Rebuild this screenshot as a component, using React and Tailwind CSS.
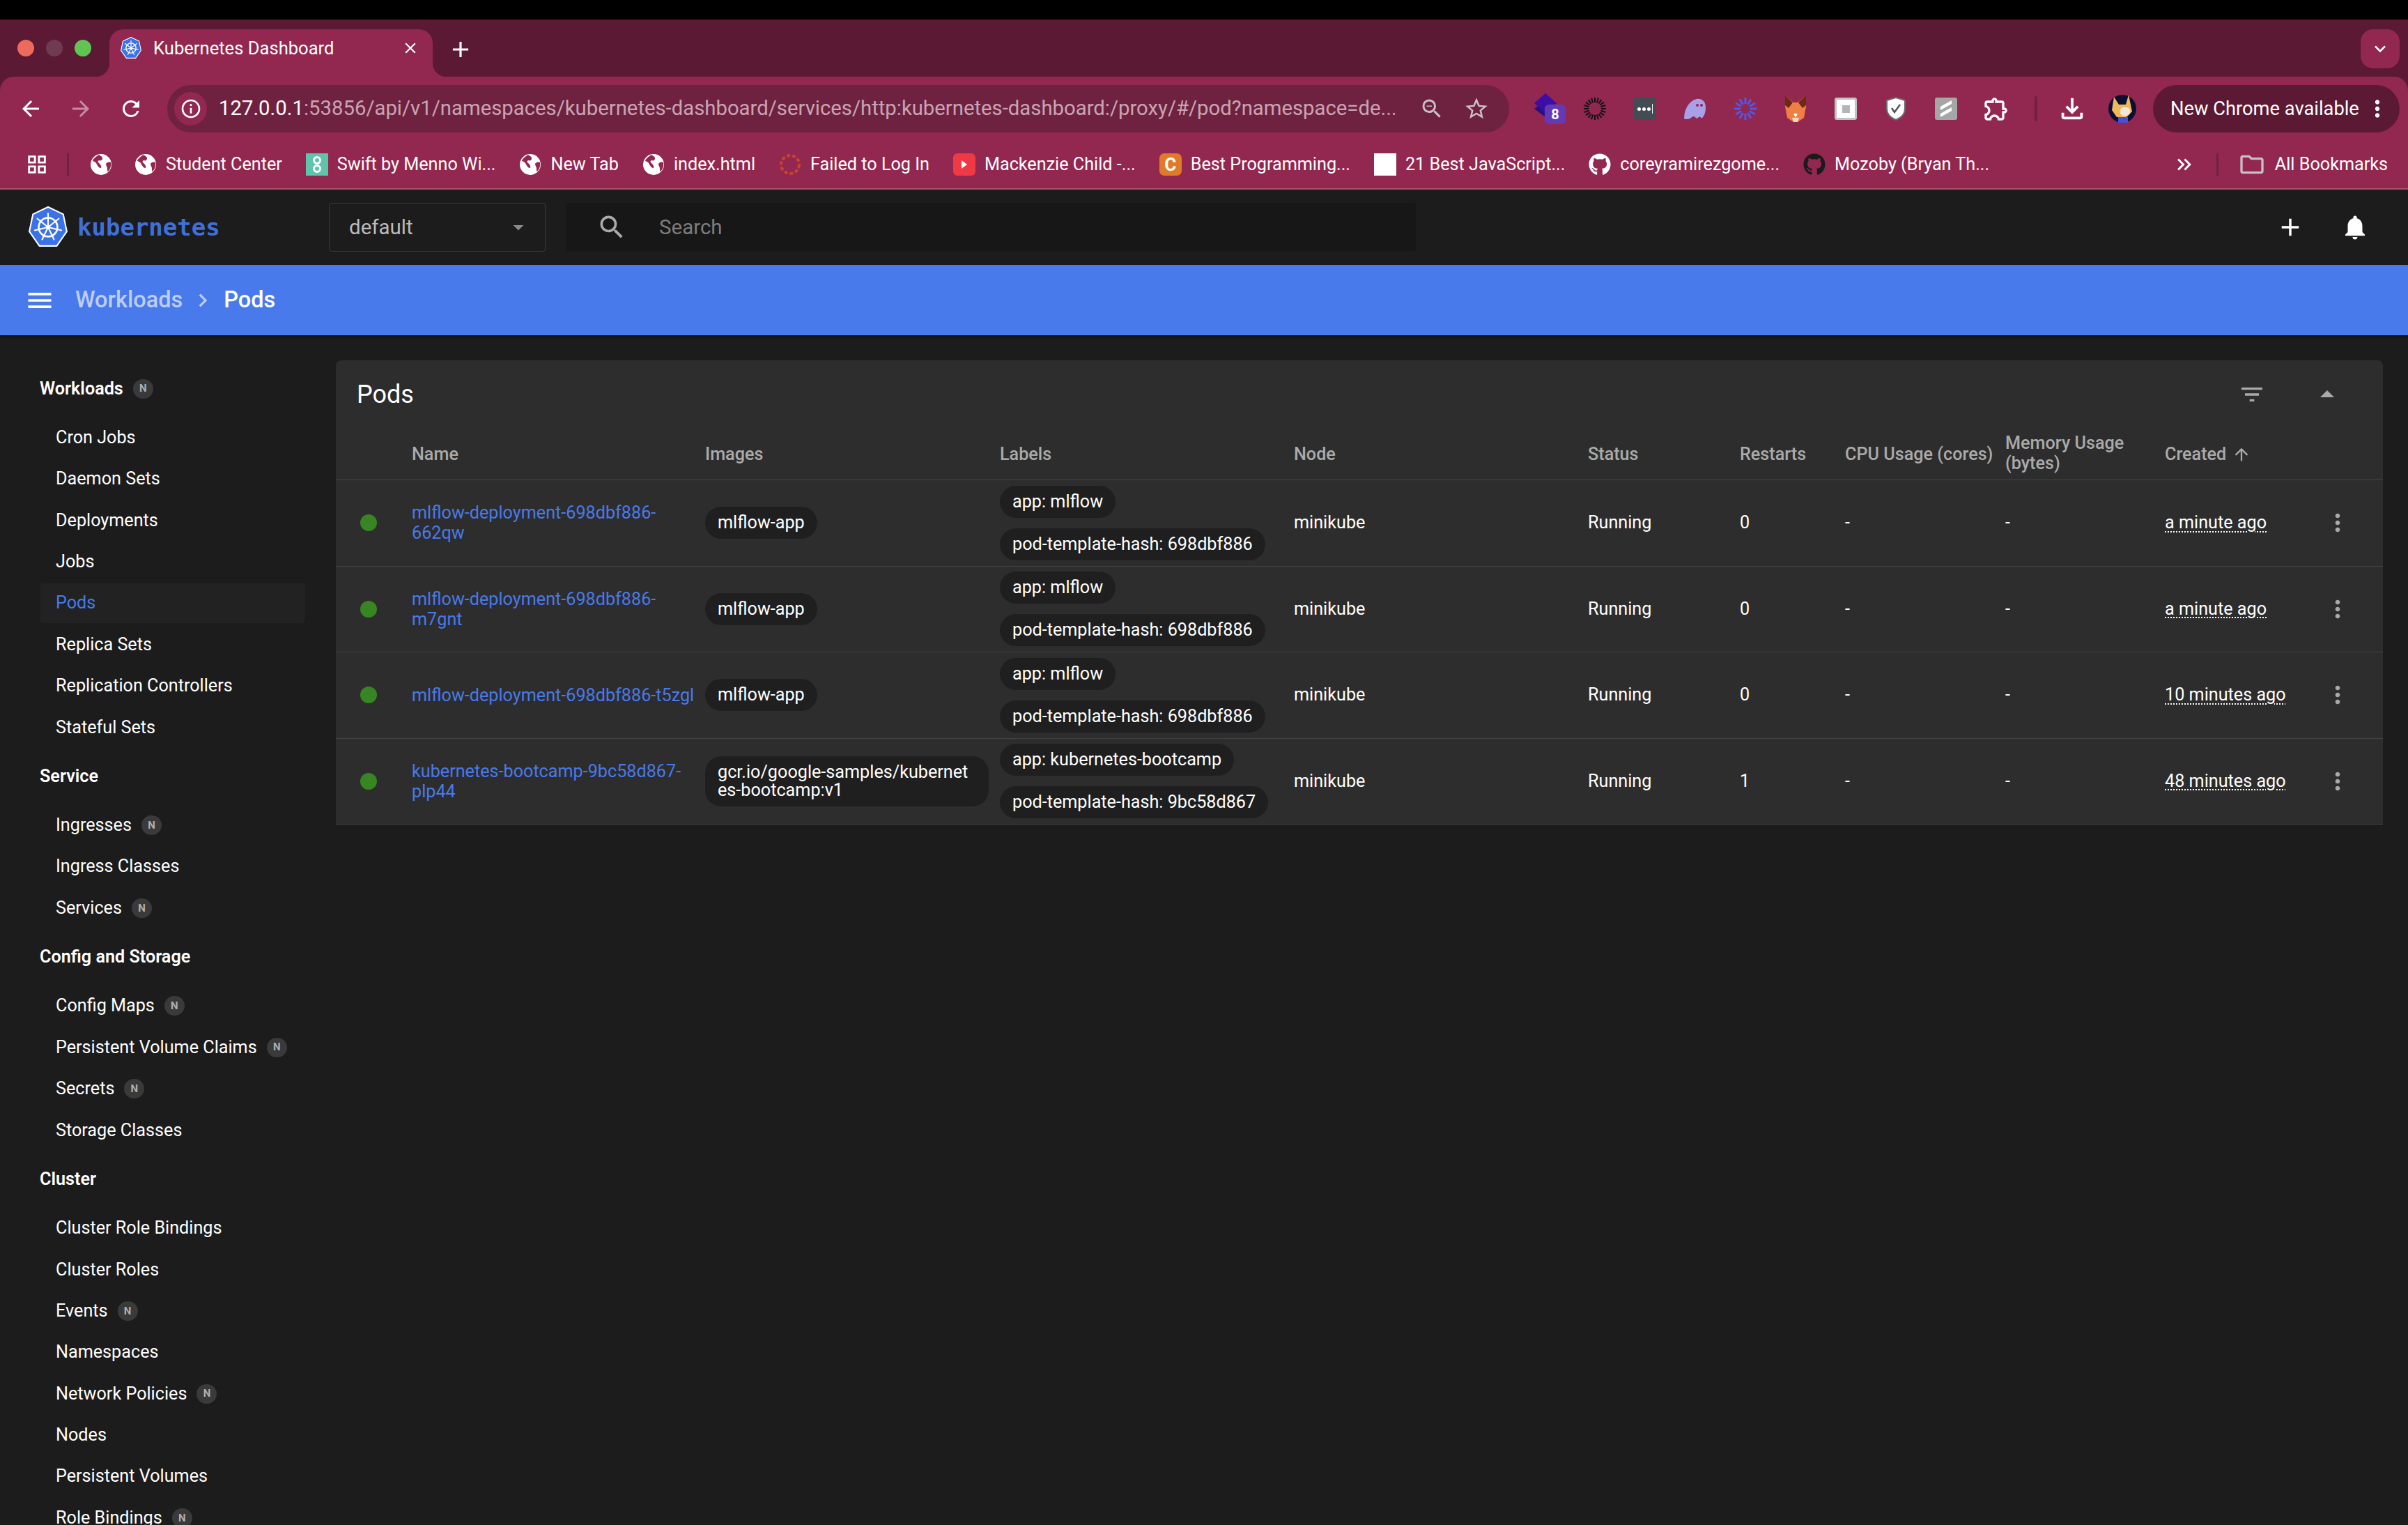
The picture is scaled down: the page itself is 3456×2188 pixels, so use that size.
import {
  MdAdd, MdArrowBack, MdArrowDropDown, MdArrowDropUp, MdArrowForward, MdArrowUpward, MdChevronRight, MdClose,
  MdFilterList, MdInfoOutline, MdKeyboardArrowDown, MdKeyboardDoubleArrowRight, MdMenu, MdMoreVert, MdNotifications,
  MdOutlineFileDownload, MdOutlineFolder, MdOutlineGridView, MdRefresh, MdSearch, MdStarBorder, MdZoomOut, MdOutlineExtension,
} from "react-icons/md";
import { FaGithub } from "react-icons/fa";

const sidebar = [
  { title: "Workloads", badge: true, items: [["Cron Jobs"], ["Daemon Sets"], ["Deployments"], ["Jobs"], ["Pods"], ["Replica Sets"], ["Replication Controllers"], ["Stateful Sets"]] },
  { title: "Service", items: [["Ingresses", true], ["Ingress Classes"], ["Services", true]] },
  { title: "Config and Storage", items: [["Config Maps", true], ["Persistent Volume Claims", true], ["Secrets", true], ["Storage Classes"]] },
  { title: "Cluster", items: [["Cluster Role Bindings"], ["Cluster Roles"], ["Events", true], ["Namespaces"], ["Network Policies", true], ["Nodes"], ["Persistent Volumes"], ["Role Bindings", true]] },
];

const pods = [
  { name: ["mlflow-deployment-698dbf886-", "662qw"], image: ["mlflow-app"], labels: ["app: mlflow", "pod-template-hash: 698dbf886"], restarts: 0, created: "a minute ago" },
  { name: ["mlflow-deployment-698dbf886-", "m7gnt"], image: ["mlflow-app"], labels: ["app: mlflow", "pod-template-hash: 698dbf886"], restarts: 0, created: "a minute ago" },
  { name: ["mlflow-deployment-698dbf886-t5zgl"], image: ["mlflow-app"], labels: ["app: mlflow", "pod-template-hash: 698dbf886"], restarts: 0, created: "10 minutes ago" },
  { name: ["kubernetes-bootcamp-9bc58d867-", "plp44"], image: ["gcr.io/google-samples/kubernet", "es-bootcamp:v1"], labels: ["app: kubernetes-bootcamp", "pod-template-hash: 9bc58d867"], restarts: 1, created: "48 minutes ago" },
];

const tableCols = "grid grid-cols-[109px_421px_423px_422px_422px_218px_151px_230px_229px_213px_100px] items-center";

function K8sLogo({ size }) {
  const spokes = [0, 51.4, 102.9, 154.3, 205.7, 257.1, 308.6];
  return (
    <svg width={size} height={size} viewBox="0 0 56 58" className="shrink-0">
      <polygon points="28,1 49,11 54,35 40,55 16,55 2,35 7,11" fill="#3a72e8" stroke="#fff" strokeWidth="2" strokeLinejoin="round" />
      <circle cx="28" cy="29" r="13" fill="none" stroke="#fff" strokeWidth="2.5" />
      <circle cx="28" cy="29" r="3" fill="#fff" />
      {spokes.map((a) => (
        <line key={a} x1="28" y1="29" x2="28" y2="10" stroke="#fff" strokeWidth="2" strokeLinecap="round" transform={`rotate(${a} 28 29)`} />
      ))}
    </svg>
  );
}

function Globe() {
  return (
    <svg width="32" height="32" viewBox="0 0 32 32" className="shrink-0">
      <circle cx="16" cy="16" r="15" fill="#fff" />
      <path d="M13 2c-4 3-8 5-9 9 3 1 5 2 6 5 2 3 3 5 6 5 1-3-1-5-3-7-2-1-2-3 0-4 3 1 5 0 5-3s-3-3-5-5z" fill="#92274f" />
      <path d="M30 13c-3-1-6 0-7 2 0 3 2 4 2 7 0 2 0 4 1 4 3-3 5-8 4-13z" fill="#92274f" />
    </svg>
  );
}

function Bookmark({ icon, text }) {
  return (
    <div className="flex items-center gap-[13px] shrink-0">
      {icon}
      <span className="text-[25.2px] text-white whitespace-nowrap leading-none">{text}</span>
    </div>
  );
}

function StackExt() {
  return (
    <div className="relative w-[65px] h-[48px] shrink-0">
      <svg width="32" height="34" viewBox="0 0 32 34" className="absolute left-[14px] top-[2px]">
        <polygon points="16,10 32,22 16,34 0,22" fill="#2a0f80" />
        <polygon points="16,0 32,14 16,28 0,14" fill="#3b0ea6" />
      </svg>
      <span className="absolute left-[29px] top-[18px] w-[30px] h-[28px] rounded-[6px] bg-[#6439b6] text-white text-[20px] font-bold flex items-center justify-center">8</span>
    </div>
  );
}

function ExtCell({ children }) {
  return <div className="w-[72px] h-[48px] flex items-center justify-center shrink-0">{children}</div>;
}

function Sun({ color, n, r1, r2, w }) {
  const list = Array.from({ length: n }, (_, i) => (i * 360) / n);
  return (
    <svg width="34" height="34" viewBox="0 0 34 34">
      {list.map((a) => (
        <line key={a} x1="17" y1={17 - r1} x2="17" y2={17 - r2} stroke={color} strokeWidth={w} transform={`rotate(${a} 17 17)`} />
      ))}
    </svg>
  );
}

function Extensions() {
  return (
    <>
      <StackExt />
      <ExtCell><Sun color="#111" n={20} r1={9} r2={16} w={2} /></ExtCell>
      <ExtCell>
        <div className="w-[32px] h-[32px] rounded-[3px] bg-[#434c55] flex items-center justify-center gap-[2px]">
          <span className="w-[5px] h-[5px] rounded-full bg-white" />
          <span className="w-[5px] h-[5px] rounded-full bg-white" />
          <span className="w-[5px] h-[5px] rounded-full bg-white" />
          <span className="w-[1px] h-[14px] bg-white" />
        </div>
      </ExtCell>
      <ExtCell>
        <svg width="34" height="34" viewBox="0 0 34 34">
          <path d="M1 31c0-12 6-25 18-28 8-1 13 4 13 12 0 7-2 13-6 16-2-3-3-3-5-1-1 1-3 1-4-1-2-2-4-1-6 1-2 2-8 3-10 1z" fill="#a9a0e8" />
          <circle cx="20" cy="12" r="2" fill="#92274f" />
          <circle cx="26" cy="12" r="2" fill="#92274f" />
        </svg>
      </ExtCell>
      <ExtCell><Sun color="#4f5be8" n={12} r1={7} r2={16} w={3} /></ExtCell>
      <ExtCell>
        <svg width="32" height="42" viewBox="0 0 32 42">
          <polygon points="1,2 13,12 19,12 31,2 31,18 28,34 19,40 13,40 4,34 1,18" fill="#ee7f45" />
          <polygon points="1,2 12,12 6,20 1,16" fill="#6a2b12" />
          <polygon points="31,2 20,12 26,20 31,16" fill="#6a2b12" />
          <polygon points="13,28 19,28 16,34" fill="#fff" />
          <polygon points="11,34 21,34 19,40 13,40" fill="#f1d9c4" />
        </svg>
      </ExtCell>
      <ExtCell>
        <div className="w-[32px] h-[32px] rounded-[3px] border-[3px] border-[#c2c2c2] bg-white flex items-center justify-center">
          <span className="w-[11px] h-[11px] bg-[#b5b5b5]" />
        </div>
      </ExtCell>
      <ExtCell>
        <svg width="28" height="34" viewBox="0 0 28 34">
          <path d="M14 1l13 4v12c0 8-6 13-13 16C7 30 1 25 1 17V5z" fill="#fff" stroke="#6c6c6c" strokeWidth="2" />
          <path d="M8 16l4 6 8-11" fill="none" stroke="#555" strokeWidth="2.5" />
        </svg>
      </ExtCell>
      <ExtCell>
        <div className="w-[32px] h-[32px] rounded-[3px] bg-[#a6a6a6] flex items-center justify-center">
          <svg width="18" height="26" viewBox="0 0 18 26">
            <path d="M17 1L1 10v5l16-9zM17 11L1 20v5l16-9z" fill="#fff" />
          </svg>
        </div>
      </ExtCell>
      <ExtCell><MdOutlineExtension size={40} className="text-white" /></ExtCell>
    </>
  );
}

function Avatar() {
  return (
    <svg width="40" height="40" viewBox="0 0 40 40">
      <circle cx="20" cy="20" r="20" fill="#0b1033" />
      <polygon points="5,22 8,3 15,14 25,14 29,0 34,24 26,32 12,32" fill="#f0b95c" />
      <rect x="17" y="18" width="14" height="12" rx="5" fill="#f4e7dc" />
      <rect x="14" y="32" width="14" height="8" fill="#4450d8" />
    </svg>
  );
}

function NBadge() {
  return (
    <span className="ml-[14px] w-[29px] h-[28px] rounded-full bg-[#3a3a3a] text-[#b0b0b0] text-[15px] font-bold flex items-center justify-center">N</span>
  );
}

function Chip({ lines }) {
  return (
    <span className={`inline-block bg-[#1f1f1f] rounded-[23px] px-[18px] py-[10px] text-[25.2px] leading-[26px] text-white whitespace-nowrap ${lines.length > 1 ? "w-[407px]" : "w-fit"}`}>
      {lines.map((l) => <span key={l} className="block">{l}</span>)}
    </span>
  );
}

function Sidebar() {
  return (
    <aside className="w-[482px] shrink-0 pt-[47px]">
      {sidebar.map((group) => (
        <div key={group.title} className="mb-[11.2px]">
          <div className="h-[59.4px] mb-[10.6px] pl-[57px] flex items-center text-[25.2px] font-semibold text-white">
            {group.title}
            {group.badge && <NBadge />}
          </div>
          {group.items.map(([name, badge]) => (
            <div key={name} className="h-[59.4px] pl-[58px] flex items-center">
              <div className={`w-[380px] h-[57px] pl-[22px] flex items-center text-[25.2px] rounded-[4px] ${name === "Pods" ? "bg-[#222222] text-[#487aeb]" : "text-white"}`}>
                {name}
                {badge && <NBadge />}
              </div>
            </div>
          ))}
        </div>
      ))}
    </aside>
  );
}

function PodsTable() {
  return (
    <section className="bg-[#2d2d2d] rounded-t-[8px] w-[2938px]">
      <div className="h-[94px] pt-[4px] pl-[30px] flex items-center text-[36px] text-white relative">
        Pods
        <MdFilterList size={40} className="absolute left-[2730px] top-[29px] text-[#aaa]" />
        <MdArrowDropUp size={48} className="absolute left-[2834px] top-[25px] text-[#aaa]" />
      </div>
      <div className={`${tableCols} h-[78px] pt-[4px] border-b border-[#444] text-[25.2px] leading-[29px] font-medium text-[#aaa]`}>
        <span />
        <span>Name</span>
        <span>Images</span>
        <span>Labels</span>
        <span>Node</span>
        <span>Status</span>
        <span>Restarts</span>
        <span>CPU Usage (cores)</span>
        <span className="-mt-[3px]">Memory Usage<br />(bytes)</span>
        <span className="flex items-center gap-[8px]">Created <MdArrowUpward size={28} /></span>
        <span />
      </div>
      {pods.map((pod) => (
        <div key={pod.name.join("")} className={`${tableCols} h-[123.5px] border-b border-[#444] text-[25.2px] text-white`}>
          <span className="w-[24px] h-[24px] rounded-full bg-[#388524] ml-[35px]" />
          <span className="text-[#487aeb] leading-[29px]">
            {pod.name.map((l) => <span key={l} className="block">{l}</span>)}
          </span>
          <Chip lines={pod.image} />
          <div className="flex flex-col gap-[15px]">
            {pod.labels.map((l) => <Chip key={l} lines={[l]} />)}
          </div>
          <span>minikube</span>
          <span>Running</span>
          <span>{pod.restarts}</span>
          <span>-</span>
          <span>-</span>
          <span className="underline decoration-dotted decoration-2 underline-offset-[4px]">{pod.created}</span>
          <MdMoreVert size={40} className="text-[#aaa] ml-[15px]" />
        </div>
      ))}
    </section>
  );
}

export default function App() {
  return (
    <div className="w-[3456px] h-[2188px] overflow-hidden flex flex-col bg-[#1c1c1c] font-['Roboto',sans-serif]">
      <div className="h-[28px] bg-black shrink-0" />

      <div className="bg-[#5c1933] shrink-0">
        <div className="h-[82px] flex items-end pl-[25px] relative">
          <div className="flex gap-[17px] self-start mt-[29px] mr-[26px]">
            <span className="w-[24px] h-[24px] rounded-full bg-[#ed6a5e]" />
            <span className="w-[24px] h-[24px] rounded-full bg-[#6e3b52]" />
            <span className="w-[24px] h-[24px] rounded-full bg-[#61c554]" />
          </div>
          <div className="relative w-[464px] h-[68px] bg-[#92274f] rounded-t-[20px] flex items-start pt-[11px] pl-[15px]">
            <span className="absolute -left-[20px] bottom-0 w-[20px] h-[20px] bg-[radial-gradient(circle_at_0_0,#5c1933_20px,#92274f_20.5px)]" />
            <span className="absolute -right-[20px] bottom-0 w-[20px] h-[20px] bg-[radial-gradient(circle_at_100%_0,#5c1933_20px,#92274f_20.5px)]" />
            <K8sLogo size={32} />
            <span className="ml-[16px] text-[25.6px] leading-[32px] text-white whitespace-nowrap">Kubernetes Dashboard</span>
            <MdClose size={26} className="absolute left-[419px] top-[14px] text-white" />
          </div>
          <MdAdd size={38} className="ml-[21px] mb-[20px] text-white" />
          <div className="absolute left-[3388px] top-[14px] w-[56px] h-[56px] rounded-[18px] bg-[#92274f] flex items-center justify-center">
            <MdKeyboardArrowDown size={32} className="text-white" />
          </div>
        </div>

        <div className="bg-[#92274f] rounded-t-[20px]">
          <div className="h-[95px] flex items-start pt-[12px] pl-[8px]">
            <div className="w-[72px] h-[68px] flex items-center justify-center"><MdArrowBack size={36} className="text-white" /></div>
            <div className="w-[72px] h-[68px] flex items-center justify-center"><MdArrowForward size={36} className="text-[#c98ba3]" /></div>
            <div className="w-[72px] h-[68px] flex items-center justify-center"><MdRefresh size={36} className="text-white" /></div>
            <div className="ml-[16px] w-[1926px] h-[68px] rounded-full bg-[#6f2240] flex items-center pl-[10px] shrink-0">
              <span className="w-[47px] h-[48px] rounded-full bg-[#92274f] flex items-center justify-center shrink-0">
                <MdInfoOutline size={32} className="text-white" />
              </span>
              <span className="ml-[17px] w-[1688px] text-[29.3px] text-[#c9a4b3] whitespace-nowrap overflow-hidden">
                <span className="text-white">127.0.0.1</span>:53856/api/v1/namespaces/kubernetes-dashboard/services/http:kubernetes-dashboard:/proxy/#/pod?namespace=de...
              </span>
              <MdZoomOut size={36} className="ml-[35px] text-[#c9c0c4]" />
              <MdStarBorder size={38} className="ml-[27px] text-[#c9c0c4]" />
            </div>
            <div className="ml-[22px] flex items-center h-[68px]">
              <Extensions />
              <span className="ml-[19px] w-[4px] h-[36px] rounded-full bg-[#6f2240]" />
              <div className="ml-[14px] w-[72px] flex justify-center"><MdOutlineFileDownload size={46} className="text-white" /></div>
              <div className="w-[72px] flex justify-center"><Avatar /></div>
              <div className="ml-[8px] w-[354px] h-[68px] rounded-full bg-[#5c1933] flex items-center pl-[25px]">
                <span className="text-[27.3px] text-white whitespace-nowrap">New Chrome available</span>
                <MdMoreVert size={38} className="ml-auto mr-[13px] text-white" />
              </div>
            </div>
          </div>

          <div className="h-[67px] border-b-2 border-[#a9506f] pb-[3px] flex items-center pl-[36px]">
            <MdOutlineGridView size={34} className="text-white shrink-0" />
            <span className="ml-[26px] w-[3px] h-[32px] bg-[#6f2240] shrink-0" />
            <div className="ml-[30px]"><Globe /></div>
            <div className="ml-[32px] flex items-center gap-[34px]">
              <Bookmark icon={<Globe />} text="Student Center" />
              <Bookmark
                icon={
                  <svg width="32" height="32" viewBox="0 0 32 32" className="shrink-0">
                    <rect width="32" height="32" fill="#5fc4ac" />
                    <circle cx="16" cy="10" r="4.5" fill="none" stroke="#fff" strokeWidth="3" />
                    <circle cx="16" cy="22" r="4.5" fill="none" stroke="#fff" strokeWidth="3" />
                  </svg>
                }
                text="Swift by Menno Wi..."
              />
              <Bookmark icon={<Globe />} text="New Tab" />
              <Bookmark icon={<Globe />} text="index.html" />
              <Bookmark icon={<svg width="32" height="32" viewBox="0 0 32 32"><circle cx="16" cy="16" r="13" fill="none" stroke="#c6452f" strokeWidth="4" strokeDasharray="5 3" /></svg>} text="Failed to Log In" />
              <Bookmark icon={<div className="w-[32px] h-[32px] rounded-[6px] bg-[#ef3a45] flex items-center justify-center shrink-0"><span className="w-0 h-0 border-y-[6px] border-y-transparent border-l-[8px] border-l-white" /></div>} text="Mackenzie Child -..." />
              <Bookmark icon={<div className="w-[32px] h-[32px] rounded-[7px] bg-[#e07b2a] flex items-center justify-center text-white text-[26px] font-bold shrink-0">C</div>} text="Best Programming..." />
              <Bookmark icon={<div className="w-[32px] h-[32px] bg-white shrink-0" />} text="21 Best JavaScript..." />
              <Bookmark icon={<FaGithub size={32} className="text-white" />} text="coreyramirezgome..." />
              <Bookmark icon={<FaGithub size={32} className="text-[#1b1b1b]" />} text="Mozoby (Bryan Th..." />
            </div>
            <div className="ml-auto flex items-center pr-[29px]">
              <MdKeyboardDoubleArrowRight size={34} className="text-white" />
              <span className="ml-[29px] w-[3px] h-[32px] bg-[#6f2240]" />
              <MdOutlineFolder size={40} className="ml-[28px] text-[#c9c0c4]" />
              <span className="ml-[13px] text-[25.2px] text-white whitespace-nowrap">All Bookmarks</span>
            </div>
          </div>
        </div>
      </div>

      <header className="h-[108px] shrink-0 bg-[#1c1c1c] flex items-center pl-[39px] relative">
        <K8sLogo size={60} />
        <span className="ml-[12px] w-[204px] text-[34px] font-bold text-[#3f6fd9] font-['DejaVu_Sans_Mono',monospace]">kubernetes</span>
        <div className="ml-[157px] w-[311px] h-[70px] border border-[#3a3a3a] rounded-[4px] flex items-center pl-[28px] text-[29.5px] text-[#bbb]">
          default
          <MdArrowDropDown size={36} className="ml-auto mr-[20px] text-[#8a8a8a]" />
        </div>
        <div className="ml-[29px] w-[1220px] h-[70px] bg-[#171717] rounded-[4px] flex items-center pl-[44px] text-[29.5px] text-[#7d7d7d]">
          <MdSearch size={44} className="text-[#aaa]" />
          <span className="ml-[46px]">Search</span>
        </div>
        <MdAdd size={42} className="ml-auto text-white" />
        <MdNotifications size={42} className="ml-[51px] mr-[55px] text-white" />
      </header>

      <div className="h-[101px] shrink-0 bg-[#487aeb] flex items-center pl-[35px] shadow-[0_2px_4px_rgba(0,0,0,0.5)] z-10">
        <MdMenu size={44} className="text-white" />
        <span className="ml-[29px] text-[32.5px] text-[#bccdf7] font-medium">Workloads</span>
        <MdChevronRight size={38} className="ml-[10px] text-[#bccdf7]" />
        <span className="ml-[11px] text-[32.5px] text-white font-medium">Pods</span>
      </div>

      <div className="flex flex-1 min-h-0">
        <Sidebar />
        <main className="pt-[36px]">
          <PodsTable />
        </main>
      </div>
    </div>
  );
}
